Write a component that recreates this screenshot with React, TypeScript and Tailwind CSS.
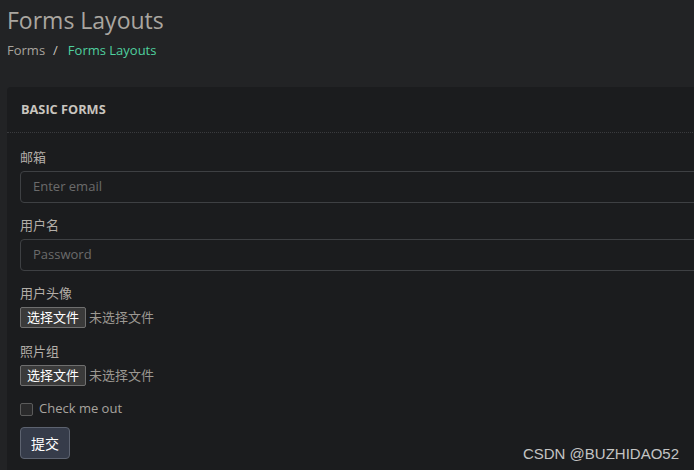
const font = { fontFamily: '"Open Sans", "Noto Sans CJK SC", sans-serif' }

function FileField({ label }: { label: string }) {
  return (
    <div>
      <div className="h-5 leading-5 text-[13px] text-[#b3aea8] mb-1">{label}</div>
      <div className="flex items-center h-[21px]">
        <span className="h-[21px] px-[6px] flex items-center bg-[#3a3a3a] border border-[#6f6f6f] rounded-[2px] text-[13px] text-white">
          选择文件
        </span>
        <span className="ml-[3px] text-[13px] text-[#9c9892]">未选择文件</span>
      </div>
    </div>
  )
}

function TextField({ label, placeholder }: { label: string; placeholder: string }) {
  return (
    <div>
      <div className="h-5 leading-5 text-[13px] text-[#b3aea8] mb-1">{label}</div>
      <div className="h-8 border border-[#3e4043] rounded-[4px] flex items-center px-3 text-[13px] text-[#6b6b6b]">
        {placeholder}
      </div>
    </div>
  )
}

export default function App() {
  return (
    <div className="relative h-[470px] w-[694px] overflow-hidden bg-[#222325]" style={font}>
      <div className="pl-[7px]">
        <div className="h-10 flex items-center text-[23px] text-[#aaa6a0]">Forms Layouts</div>
        <div className="h-5 mt-[1px] flex items-center text-[13px]">
          <span className="text-[#a8a49e]">Forms</span>
          <span className="ml-[8px] text-[#c8c4be]">/</span>
          <span className="ml-[10px] text-[#4fd09f]">Forms Layouts</span>
        </div>

        <div className="mt-[26px] w-[720px] bg-[#1b1c1e] rounded-[4px]">
          <div className="h-[46px] flex items-center px-[14px] border-b border-dotted border-[#3a3b3e] text-[12.75px] font-bold text-[#c9c5bf]">
            BASIC FORMS
          </div>
          <div className="px-[13px] pt-[14px] pb-4 flex flex-col">
            <TextField label="邮箱" placeholder="Enter email" />
            <div className="mt-3">
              <TextField label="用户名" placeholder="Password" />
            </div>
            <div className="mt-3">
              <FileField label="用户头像" />
            </div>
            <div className="mt-[13px]">
              <FileField label="照片组" />
            </div>
            <div className="mt-[13px] h-5 flex items-center">
              <span className="w-[13px] h-[13px] border border-[#5b5b5b] bg-[#2a2a2b] rounded-[2px]" />
              <span className="ml-[6px] text-[13px] text-[#a8a49e]">Check me out</span>
            </div>
            <div className="mt-2">
              <button className="w-[50px] h-8 bg-[#363c4a] border border-[#5d6370] rounded-[4px] text-[14px] text-white">
                提交
              </button>
            </div>
          </div>
        </div>
      </div>

      <div
        className="absolute right-[15px] top-[443px] text-[15px] text-[#c4c4c4]"
        style={{ fontFamily: '"Liberation Sans", Arial, sans-serif' }}
      >
        CSDN @BUZHIDAO52
      </div>
    </div>
  )
}
